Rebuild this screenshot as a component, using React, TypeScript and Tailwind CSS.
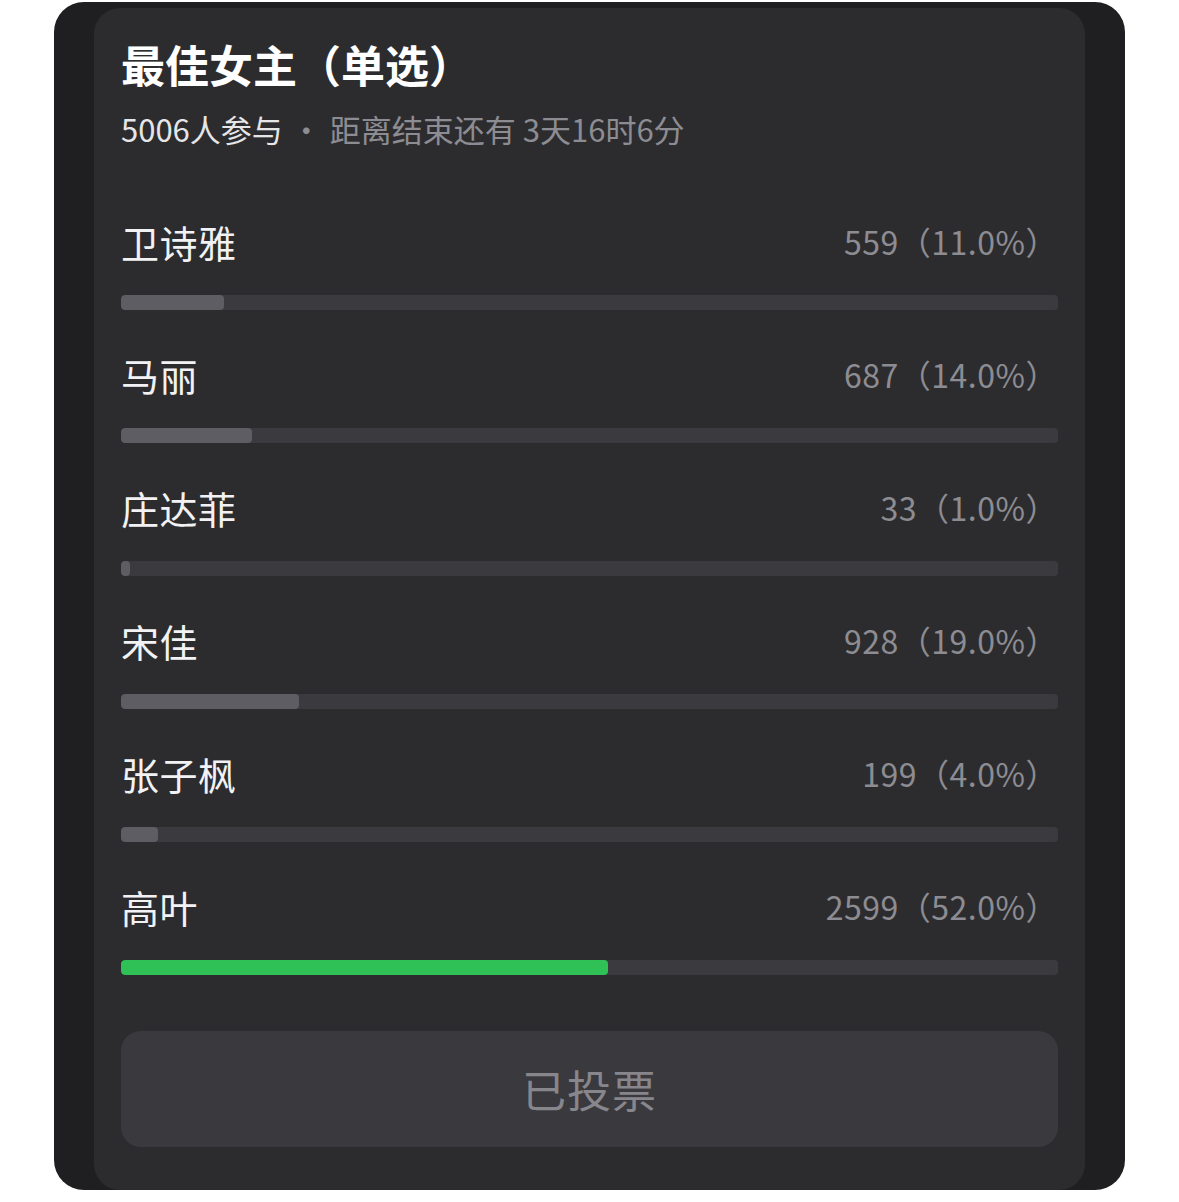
import React from 'react'

const options = [
  { name: '卫诗雅', votes: 559, pct: 11, fill: 'bg-[#5e5d63]' },
  { name: '马丽', votes: 687, pct: 14, fill: 'bg-[#5e5d63]' },
  { name: '庄达菲', votes: 33, pct: 1, fill: 'bg-[#5e5d63]' },
  { name: '宋佳', votes: 928, pct: 19, fill: 'bg-[#5e5d63]' },
  { name: '张子枫', votes: 199, pct: 4, fill: 'bg-[#5e5d63]' },
  { name: '高叶', votes: 2599, pct: 52, fill: 'bg-[#30c156]' },
]

function OptionRow({ name, votes, pct, fill }: (typeof options)[number]) {
  return (
    <div className="h-[133px]">
      <div className="flex items-center justify-between h-[50px]">
        <span className="text-[38px] text-[#f2f2f4] tracking-[0.5px]">{name}</span>
        <span className="text-[32px] text-[#8d8c92] tracking-[0.5px]">
          {votes}（{pct.toFixed(1)}%）
        </span>
      </div>
      <div className="mt-[29px] h-[15px] rounded-[4px] bg-[#3b3a3f] overflow-hidden">
        <div className={`h-full rounded-[4px] ${fill}`} style={{ width: `${Math.max(pct, 1)}%` }} />
      </div>
    </div>
  )
}

export default function App() {
  return (
    <div
      className="w-[1179px] h-[1202px] bg-white pt-[2px] pl-[54px]"
      style={{ fontFamily: '"Noto Sans CJK SC", "Noto Sans", sans-serif' }}
    >
      <div className="w-[1071px] h-[1188px] rounded-[30px] bg-[#1f1f22] pt-[6px] pl-[40px]">
        <div className="w-[991px] h-[1182px] rounded-[26px] bg-[#2c2c2f] px-[27px] pt-[26px]">
          <h1 className="text-[44px] leading-[60px] font-bold text-white">最佳女主（单选）</h1>
          <p className="mt-[15px] text-[31px] leading-[40px] text-[#8d8c92]">
            <span className="text-[#e6e6e8]">5006人参与</span>
            <span className="mx-[8px]">·</span>距离结束还有 3天16时6分
          </p>
          <div className="mt-[67px]">
            {options.map((o) => (
              <OptionRow key={o.name} {...o} />
            ))}
          </div>
          <button className="mt-[17px] w-full h-[116px] rounded-[20px] bg-[#3a393e] text-[44px] text-[#87868c] tracking-[1px]">
            已投票
          </button>
        </div>
      </div>
    </div>
  )
}
